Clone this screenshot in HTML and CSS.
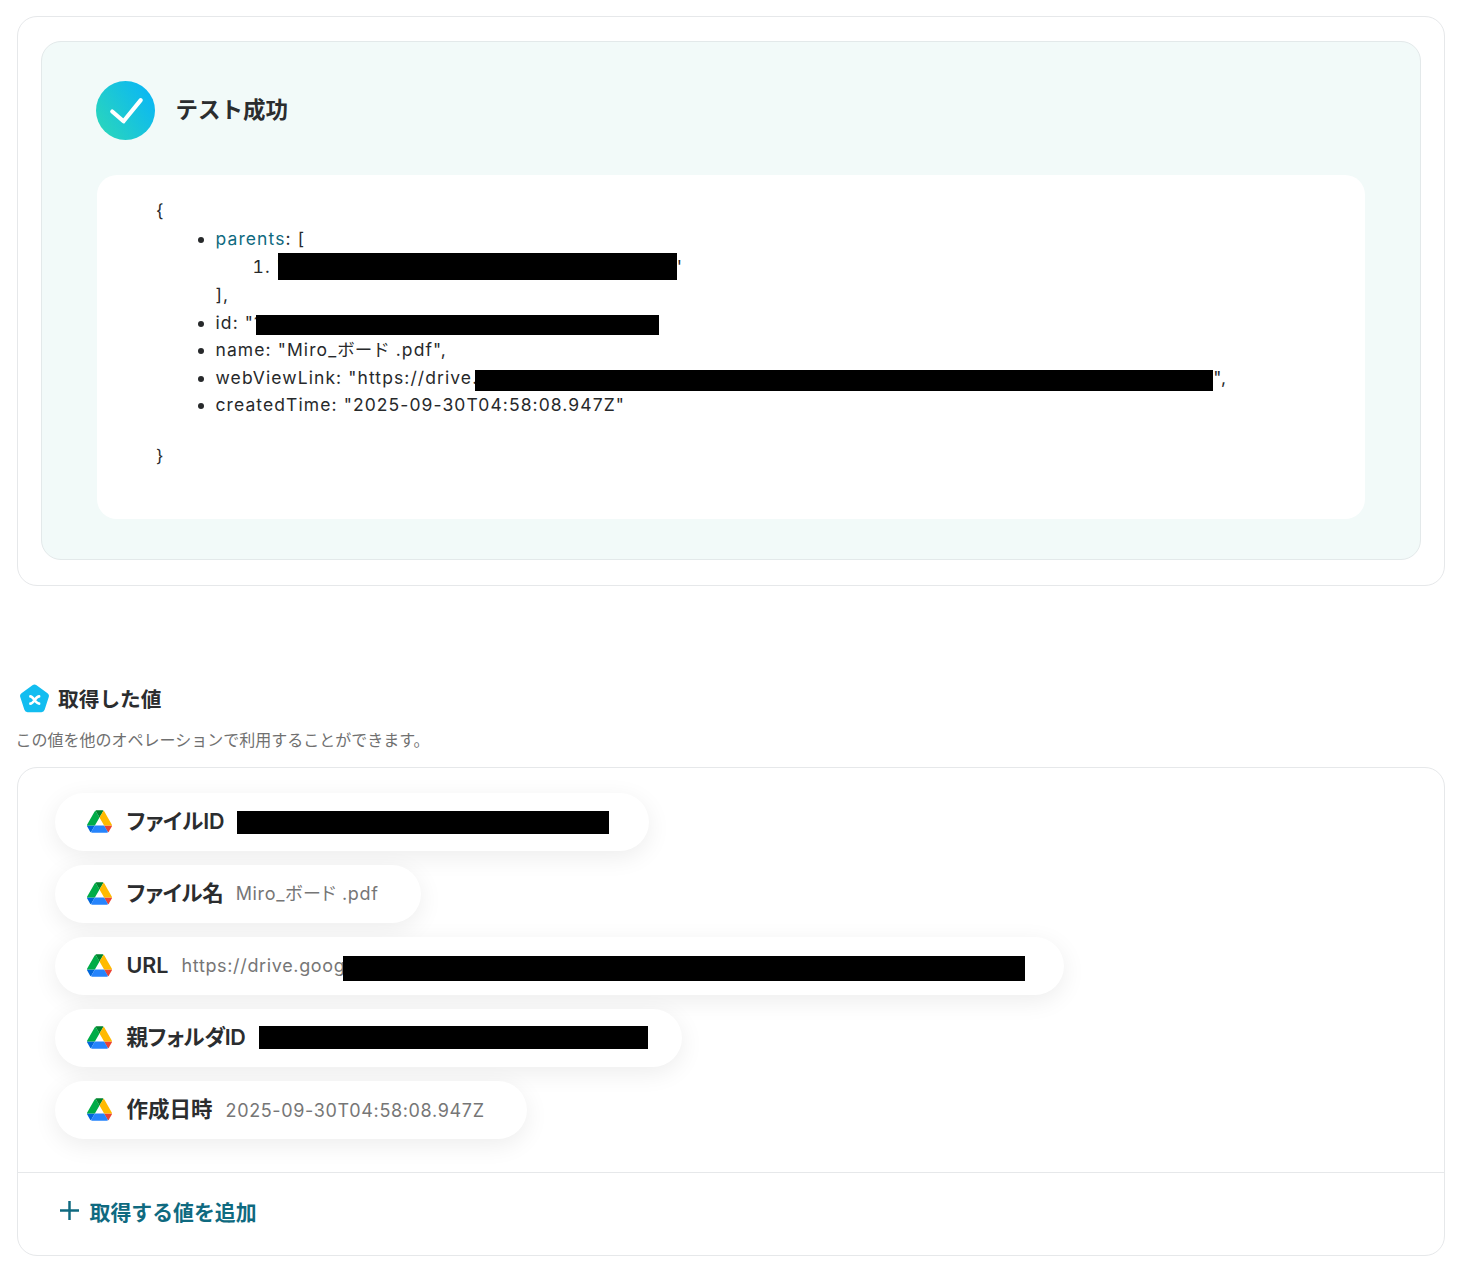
FILE: index.html
```html
<!DOCTYPE html>
<html lang="ja">
<head>
<meta charset="utf-8">
<title>テスト成功</title>
<link rel="stylesheet" href="styles.css">
</head>
<body>
<svg class="defs" width="0" height="0" aria-hidden="true">
  <defs>
    <linearGradient id="grad" x1="0" y1="1" x2="1" y2="0.35">
      <stop offset="0" stop-color="#2dd9b6"/><stop offset="1" stop-color="#0cb8f2"/>
    </linearGradient>
    <symbol id="drive" viewBox="0 0 87.3 78">
      <path d="m6.6 66.85 3.85 6.65c.8 1.4 1.95 2.5 3.3 3.3l13.75-23.8h-27.5c0 1.55.4 3.1 1.2 4.5z" fill="#0066da"/>
      <path d="m43.65 25-13.75-23.8c-1.35.8-2.5 1.9-3.3 3.3l-25.4 44a9.06 9.06 0 0 0 -1.2 4.5h27.5z" fill="#00ac47"/>
      <path d="m73.55 76.8c1.35-.8 2.5-1.9 3.3-3.3l1.6-2.75 7.65-13.25c.8-1.4 1.2-2.95 1.2-4.5h-27.502l5.852 11.5z" fill="#ea4335"/>
      <path d="m43.65 25 13.75-23.8c-1.35-.8-2.9-1.2-4.5-1.2h-18.5c-1.6 0-3.15.45-4.5 1.2z" fill="#00832d"/>
      <path d="m59.8 53h-32.3l-13.75 23.8c1.35.8 2.9 1.2 4.5 1.2h50.8c1.6 0 3.15-.45 4.5-1.2z" fill="#2684fc"/>
      <path d="m73.4 26.5-12.7-22c-.8-1.4-1.95-2.5-3.3-3.3l-13.75 23.8 16.15 28h27.45c0-1.55-.4-3.1-1.2-4.5z" fill="#ffba00"/>
    </symbol>
  </defs>
</svg>

<main class="page">
  <section class="card result-card">
    <div class="success">
      <header class="success-head">
        <svg class="check" viewBox="0 0 60 60" aria-hidden="true">
          <circle cx="30" cy="30" r="30" fill="url(#grad)"/>
          <path d="M16.500 31 28 41 45.500 19.500" fill="none" stroke="#fff" stroke-width="4.200" stroke-linecap="round" stroke-linejoin="round"/>
        </svg>
        <h2 class="success-title">テスト成功</h2>
      </header>
      <div class="json">
        <div class="brace">{</div>
        <ul class="json-list">
          <li><a class="key-link">parents</a>: [
            <ol class="json-sub"><li>"<span class="redact r-parent"></span>'</li></ol>
            ],
          </li>
          <li>id: "1<span class="redact r-id"></span></li>
          <li>name: "Miro_<span class="kana">ボード</span> .pdf",</li>
          <li>webViewLink: "https://drive.<span class="redact r-link"></span>",</li>
          <li>createdTime: "2025-09-30T04:58:08.947Z"</li>
        </ul>
        <div class="brace">}</div>
      </div>
    </div>
  </section>

  <section class="values">
    <div class="values-head">
      <svg class="penta" viewBox="0 0 30 30" aria-hidden="true">
        <path d="M13 1.300a3.400 3.400 0 0 1 4 0l10.600 7.600a3.300 3.300 0 0 1 1.200 3.700l-4 12.400a3.300 3.300 0 0 1-3.200 2.300H8.400a3.300 3.300 0 0 1-3.200-2.300l-4-12.400a3.300 3.300 0 0 1 1.200-3.700z" fill="#12bdf0"/>
        <path d="M11 12c3 0 5 7 8.500 7M19.500 12c-3.500 0-5 7-8.500 7" fill="none" stroke="#fff" stroke-width="2.500" stroke-linecap="round"/>
      </svg>
      <h3 class="values-title">取得した値</h3>
    </div>
    <p class="values-desc">この値を他のオペレーションで利用することができます。</p>
    <div class="card values-card">
      <div class="pills">
        <div class="pill pill-id"><svg class="drive"><use href="#drive"/></svg><span class="pill-label">ファイルID</span><span class="redact r-p1"></span></div>
        <div class="pill pill-name"><svg class="drive"><use href="#drive"/></svg><span class="pill-label">ファイル名</span><span class="pill-value">Miro_ボード .pdf</span></div>
        <div class="pill pill-url"><svg class="drive"><use href="#drive"/></svg><span class="pill-label">URL</span><span class="pill-value">https://drive.goog</span><span class="redact r-p2"></span></div>
        <div class="pill pill-parent"><svg class="drive"><use href="#drive"/></svg><span class="pill-label">親フォルダID</span><span class="redact r-p3"></span></div>
        <div class="pill pill-date"><svg class="drive"><use href="#drive"/></svg><span class="pill-label">作成日時</span><span class="pill-value">2025-09-30T04:58:08.947Z</span></div>
      </div>
      <div class="add-row">
        <svg class="plus" viewBox="0 0 20 20" aria-hidden="true"><path d="M10 0v20M0 10h20" fill="none" stroke="#0f6a80" stroke-width="2.600"/></svg>
        <span class="add-text">取得する値を追加</span>
      </div>
    </div>
  </section>
</main>
</body>
</html>
```
FILE: styles.css
```css
* { box-sizing: border-box; }
html, body { margin: 0; padding: 0; background: #fff; }
body {
  font-family: Inter, "Noto Sans CJK JP", sans-serif;
  color: #27292b;
  width: 1458px;
  height: 1264px;
  overflow: hidden;
}
.defs { position: absolute; }
.page { padding: 16px 13px 0 16px; }
.card {
  border: 1.5px solid #e6e8ea;
  border-radius: 20px;
  background: #fff;
}
.result-card { height: 570px; padding: 24px 23.500px; margin-left: 0.500px; }
.success {
  height: 519px;
  background: #f2faf9;
  border: 1.500px solid #e3e9ea;
  border-radius: 20px;
  padding: 38px 54px 0;
}
.success-head { display: flex; align-items: center; gap: 20.500px; height: 60px; }
.check { width: 59px; height: 59px; flex: none; }
.success-title { margin: 0; font-size: 22.500px; font-weight: 700; color: #2b2d2f; position: relative; top: -2.500px; }
.json {
  margin: 34.500px 0 0 1px;
  width: 1268px;
  height: 344.500px;
  background: #fff;
  border-radius: 20px;
  padding: 22.500px 59px 0;
  font-size: 17.500px;
  line-height: 27.600px;
  letter-spacing: 1.090px;
}
.brace { height: 27.600px; }
.json-list { margin: 0 0 23.400px; padding: 0 0 0 59.500px; }
.json-sub { margin: 1px 0 -1px; padding: 0 0 0 61px; }
.key-link { color: #0f6a80; }
.kana { letter-spacing: 0; }
.redact { display: inline-block; background: #000; vertical-align: middle; position: relative; }
.r-parent { width: 399px; height: 27px; margin-left: -8px; top: -2px; }
.r-id { width: 403px; height: 20px; margin-left: -6px; top: 1px; }
.r-link { width: 738px; height: 21px; margin-left: -3px; top: 2px; }
.values { margin-top: 98px; }
.values-head { display: flex; align-items: center; gap: 8px; margin-left: 3px; height: 30px; }
.penta { width: 31px; height: 31px; flex: none; }
.values-title { margin: 0; font-size: 20.700px; font-weight: 700; color: #2b2d2f; position: relative; top: -1px; }
.values-desc { margin: 14px 0 0 -0.500px; font-size: 16px; line-height: 24px; color: #707070; }
.values-card { margin: 15px 0 0 0.500px; height: 489px; }
.pills { display: flex; flex-direction: column; align-items: flex-start; gap: 14px; padding: 24.500px 0 0 37px; height: 404px; }
.pill {
  display: flex;
  align-items: center;
  height: 58px;
  background: #fff;
  border-radius: 29px;
  padding-left: 32px;
  box-shadow: 0 6px 24px rgba(0, 0, 0, 0.075);
}
.pill-id { width: 594px; }
.pill-name { width: 366px; }
.pill-url { width: 1009px; }
.pill-parent { width: 627px; }
.pill-date { width: 472px; }
.drive { width: 25px; height: 23px; flex: none; margin-right: 15px; }
.pill-label { font-size: 21.500px; line-height: 24px; margin-bottom: 2px; font-weight: 600; color: #2b2d2f; white-space: nowrap; font-feature-settings: "palt"; }
.pill-value { font-size: 18px; line-height: 24px; color: #767676; white-space: nowrap; margin-left: 13px; letter-spacing: 0.650px; font-feature-settings: "palt"; }
.pill-name .pill-label { letter-spacing: -0.200px; }
.pill-name .pill-value { margin-left: 12px; }
.pill-parent .pill-label { letter-spacing: -0.400px; }
.pill-date .pill-value { margin-top: 2px; }
.r-p1 { width: 372px; height: 23px; margin-left: 12px; margin-top: 2px; }
.r-p2 { width: 682px; height: 25px; margin-left: -2px; margin-top: 5px; }
.r-p3 { width: 389px; height: 23px; margin-left: 14px; }
.add-row { display: flex; align-items: center; gap: 11px; height: 84px; padding: 0 0 8px 42px; border-top: 1.500px solid #e6e8ea; }
.plus { width: 19px; height: 19px; flex: none; }
.add-text { font-size: 20.900px; font-weight: 600; color: #0f6a80; }
```
